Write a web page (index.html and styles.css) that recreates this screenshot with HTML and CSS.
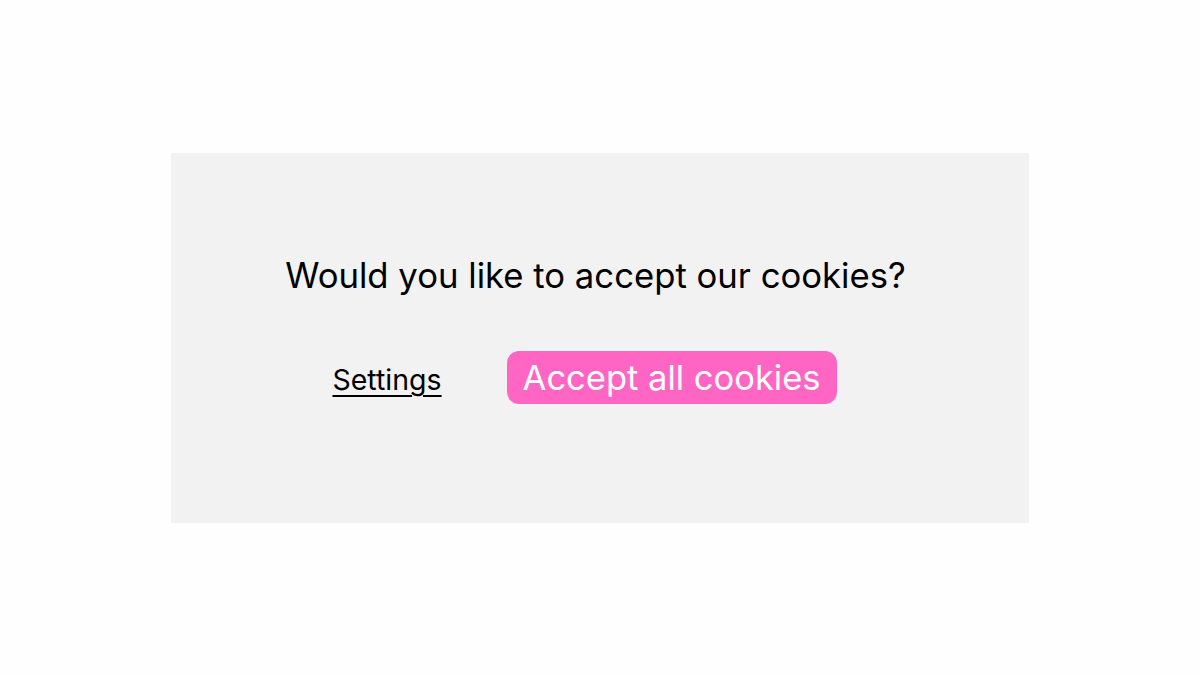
FILE: index.html
```html
<!DOCTYPE html>
<html>
<head>
<meta charset="utf-8">
<link rel="stylesheet" href="styles.css">
</head>
<body>
<div class="page">
  <div class="panel">
    <h1 class="title">Would you like to accept our cookies?</h1>
    <div class="actions">
      <a class="settings" href="#">Settings</a>
      <button class="accept">Accept all cookies</button>
    </div>
  </div>
</div>
</body>
</html>
```
FILE: styles.css
```css
html, body {
  margin: 0;
  padding: 0;
  background: #fefefe;
  font-family: "Inter", "Liberation Sans", sans-serif;
}
.page {
  width: 1200px;
  height: 675px;
  display: flex;
  align-items: center;
  justify-content: center;
}
.panel {
  width: 858px;
  height: 370px;
  background: #f2f2f2;
  display: flex;
  flex-direction: column;
  align-items: center;
  box-sizing: border-box;
  padding-top: 100px;
}
.title {
  margin: 0 9px 0 0;
  font-weight: 400;
  font-size: 34.7px;
  line-height: 44px;
  color: #000;
}
.actions {
  margin-top: 54px;
  display: flex;
  align-items: center;
  gap: 65px;
  margin-right: 31px;
}
.settings {
  color: #000;
  font-size: 28.5px;
  line-height: 34px;
  margin-top: 6px;
  text-decoration: underline;
  text-underline-offset: 5px;
  text-decoration-thickness: 2px;
}
.accept {
  font-family: inherit;
  background: #ff66c4;
  color: #fff;
  border: none;
  border-radius: 12px;
  font-size: 34.5px;
  height: 53px;
  padding: 0 16px;
}
```
